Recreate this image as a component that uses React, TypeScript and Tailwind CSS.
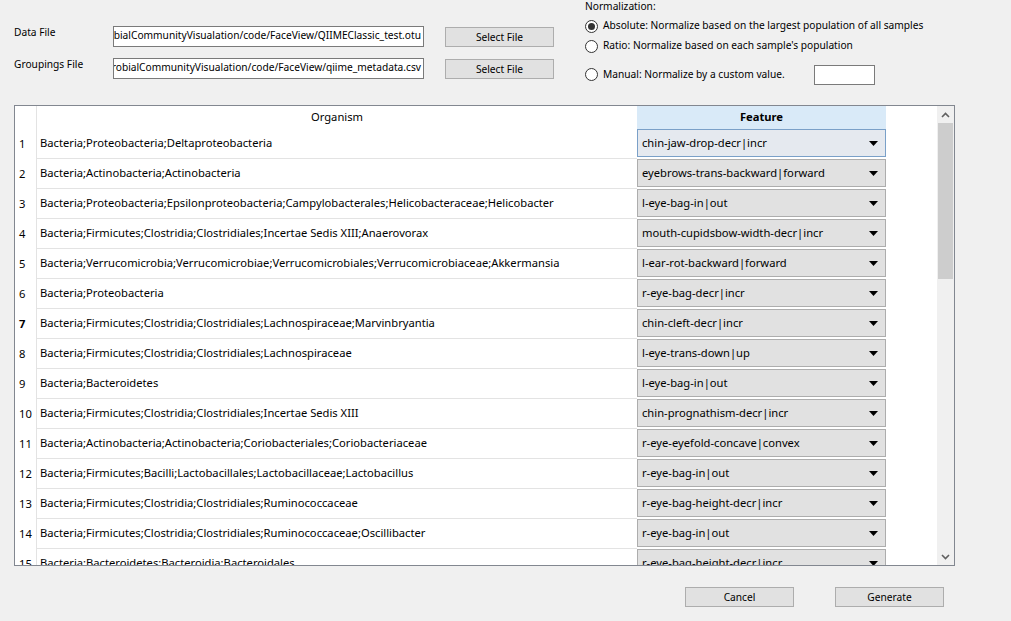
import React from 'react';

const rows: [string, string][] = [
  ['Bacteria;Proteobacteria;Deltaproteobacteria', 'chin-jaw-drop-decr|incr'],
  ['Bacteria;Actinobacteria;Actinobacteria', 'eyebrows-trans-backward|forward'],
  ['Bacteria;Proteobacteria;Epsilonproteobacteria;Campylobacterales;Helicobacteraceae;Helicobacter', 'l-eye-bag-in|out'],
  ['Bacteria;Firmicutes;Clostridia;Clostridiales;Incertae Sedis XIII;Anaerovorax', 'mouth-cupidsbow-width-decr|incr'],
  ['Bacteria;Verrucomicrobia;Verrucomicrobiae;Verrucomicrobiales;Verrucomicrobiaceae;Akkermansia', 'l-ear-rot-backward|forward'],
  ['Bacteria;Proteobacteria', 'r-eye-bag-decr|incr'],
  ['Bacteria;Firmicutes;Clostridia;Clostridiales;Lachnospiraceae;Marvinbryantia', 'chin-cleft-decr|incr'],
  ['Bacteria;Firmicutes;Clostridia;Clostridiales;Lachnospiraceae', 'l-eye-trans-down|up'],
  ['Bacteria;Bacteroidetes', 'l-eye-bag-in|out'],
  ['Bacteria;Firmicutes;Clostridia;Clostridiales;Incertae Sedis XIII', 'chin-prognathism-decr|incr'],
  ['Bacteria;Actinobacteria;Actinobacteria;Coriobacteriales;Coriobacteriaceae', 'r-eye-eyefold-concave|convex'],
  ['Bacteria;Firmicutes;Bacilli;Lactobacillales;Lactobacillaceae;Lactobacillus', 'r-eye-bag-in|out'],
  ['Bacteria;Firmicutes;Clostridia;Clostridiales;Ruminococcaceae', 'r-eye-bag-height-decr|incr'],
  ['Bacteria;Firmicutes;Clostridia;Clostridiales;Ruminococcaceae;Oscillibacter', 'r-eye-bag-in|out'],
  ['Bacteria;Bacteroidetes;Bacteroidia;Bacteroidales', 'r-eye-bag-height-decr|incr'],
];

const Arrow = () => (
  <svg width="9" height="5" viewBox="0 0 9 5" className="shrink-0">
    <path d="M0 0h9L4.5 5z" fill="#000" />
  </svg>
);

const Radio = ({ checked }: { checked?: boolean }) => (
  <span className="w-[13px] h-[13px] rounded-full border border-[#333] bg-white flex items-center justify-center shrink-0">
    {checked && <span className="w-[7px] h-[7px] rounded-full bg-[#333]" />}
  </span>
);

const Button = ({ label }: { label: string }) => (
  <div className="w-[109px] h-[20px] bg-[#e1e1e1] border border-[#adadad] flex items-center justify-center pt-[2px]">
    {label}
  </div>
);

const PathBox = ({ value }: { value: string }) => (
  <div className="w-[311px] h-[21px] bg-white border border-[#7a7a7a] overflow-hidden flex items-center justify-end pr-[2px] whitespace-nowrap">
    {value}
  </div>
);

const App = () => {
  return (
    <div
      className="w-[1011px] h-[621px] bg-[#f0f0f0] text-[10.2px] text-black overflow-hidden flex flex-col"
      style={{ fontFamily: '"Noto Sans", "Liberation Sans", sans-serif' }}
    >
      {/* top controls */}
      <div className="h-[105px] flex">
        <div className="pl-[14px] pt-[25px] flex flex-col gap-[10px]">
          <div className="flex items-center">
            <span className="w-[99px] -mt-[7px]">Data File</span>
            <PathBox value="bialCommunityVisualation/code/FaceView/QIIMEClassic_test.otu" />
            <div className="ml-[21px] mt-[2px]"><Button label="Select File" /></div>
          </div>
          <div className="flex items-center">
            <span className="w-[99px] -mt-[6px]">Groupings File</span>
            <PathBox value="robialCommunityVisualation/code/FaceView/qiime_metadata.csv" />
            <div className="ml-[21px] mt-[2px]"><Button label="Select File" /></div>
          </div>
        </div>
        <div className="ml-[31px] flex flex-col whitespace-nowrap">
          <div className="h-[14px] leading-[13px]">Normalization:</div>
          <div className="flex items-center gap-[5px] h-[20px] mt-[2px]">
            <Radio checked />
            <span>Absolute: Normalize based on the largest population of all samples</span>
          </div>
          <div className="flex items-center gap-[5px] h-[20px]">
            <Radio />
            <span>Ratio: Normalize based on each sample's population</span>
          </div>
          <div className="flex items-center h-[21px] mt-[8px]">
            <div className="flex items-center gap-[5px] w-[229px]">
              <Radio />
              <span>Manual: Normalize by a custom value.</span>
            </div>
            <div className="w-[61px] h-[20px] bg-white border border-[#7a7a7a]" />
          </div>
        </div>
      </div>

      {/* table */}
      <div className="ml-[14px] w-[941px] h-[461px] border border-[#828790] bg-white flex overflow-hidden text-[11.2px]">
        <div className="flex-1 flex flex-col overflow-hidden">
          <div className="flex h-[23px] shrink-0">
            <div className="w-[22px] border-r border-[#e3e3e3]" />
            <div className="w-[600px] flex items-center justify-center">Organism</div>
            <div className="w-[249px] bg-[#d9eaf8] flex items-center justify-center font-bold">Feature</div>
          </div>
          {rows.map(([org, feat], i) => (
            <div key={i} className="flex h-[30px] shrink-0">
              <div className={`w-[22px] border-r border-[#e3e3e3] pl-[4px] flex items-center ${i === 6 ? 'font-bold' : ''}`}>
                {i + 1}
              </div>
              <div className="w-[600px] border-b border-[#e3e3e3] pl-[3px] flex items-center whitespace-nowrap">
                {org}
              </div>
              <div className="w-[249px] flex items-start">
                <div
                  className={`w-[249px] h-[28px] border flex items-center justify-between pl-[4px] pr-[7px] ${
                    i === 0 ? 'bg-[#e5e9ef] border-[#7aa0c8]' : 'bg-[#e1e1e1] border-[#adadad]'
                  }`}
                >
                  <span className="whitespace-nowrap">{feat}</span>
                  <Arrow />
                </div>
              </div>
            </div>
          ))}
        </div>
        {/* scrollbar */}
        <div className="w-[17px] bg-[#f0f0f0] flex flex-col items-center shrink-0">
          <div className="h-[17px] w-full flex items-center justify-center">
            <svg width="9" height="6" viewBox="0 0 9 6">
              <path d="M1 5l3.5-3.5L8 5" fill="none" stroke="#606060" strokeWidth="1.6" />
            </svg>
          </div>
          <div className="w-[15px] h-[156px] bg-[#cdcdcd]" />
          <div className="flex-1" />
          <div className="h-[17px] w-full flex items-center justify-center">
            <svg width="9" height="6" viewBox="0 0 9 6">
              <path d="M1 1l3.5 3.5L8 1" fill="none" stroke="#606060" strokeWidth="1.6" />
            </svg>
          </div>
        </div>
      </div>

      {/* bottom buttons */}
      <div className="flex pl-[685px] pt-[21px] gap-[41px]">
        <Button label="Cancel" />
        <Button label="Generate" />
      </div>
    </div>
  );
};

export default App;
